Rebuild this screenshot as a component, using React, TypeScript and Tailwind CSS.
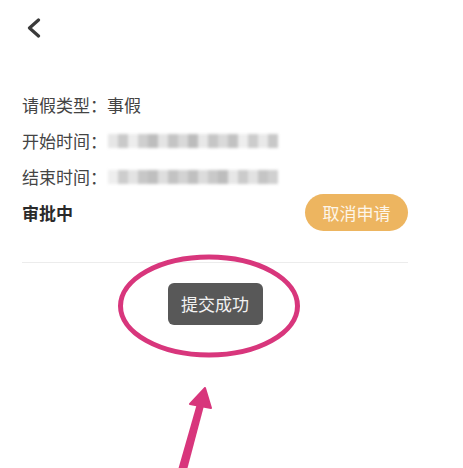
import React from 'react';

const rows = [
  { label: '请假类型：', value: '事假' },
  { label: '开始时间：', value: null },
  { label: '结束时间：', value: null },
];

// mosaic blocks standing in for the masked date values
const mosaic = [
  ['#e6e6e6', '#c9c9c9', '#ededed', '#cfcfcf', '#bdbdbd', '#e4e4e4', '#c4c4c4', '#d9d9d9', '#bcbcbc', '#e8e8e8', '#c6c6c6', '#dadada', '#c2c2c2', '#eeeeee', '#cccccc', '#e9e9e9', '#c8c8c8'],
  ['#eeeeee', '#cdcdcd', '#e3e3e3', '#c7c7c7', '#bfbfbf', '#dedede', '#c3c3c3', '#d3d3d3', '#c0c0c0', '#dcdcdc', '#c9c9c9', '#bdbdbd', '#e7e7e7', '#cbcbcb', '#e2e2e2', '#c5c5c5', '#d0d0d0'],
];

function Masked({ pattern }: { pattern: string[] }) {
  return (
    <div className="ml-[1px] flex h-[14px] blur-[1.5px]">
      {pattern.map((c, i) => (
        <div key={i} className="h-full w-[10px]" style={{ backgroundColor: c }} />
      ))}
    </div>
  );
}

export default function App() {
  return (
    <div
      className="relative h-[468px] w-[463px] overflow-hidden bg-white text-[#444]"
      style={{ fontFamily: '"Noto Sans CJK SC", "Noto Sans", sans-serif' }}
    >
      {/* Header */}
      <div className="flex h-[56px] items-center pl-[27px]">
        <svg width="14" height="20" viewBox="0 0 14 20" fill="none">
          <polyline points="11.5,2 2.5,10 11.5,18" stroke="#3a3a3a" strokeWidth="3.2" strokeLinecap="round" strokeLinejoin="round" />
        </svg>
      </div>

      <div className="pl-[22px] pr-[55px] pt-[31px]">
        {rows.map((row, i) => (
          <div key={row.label} className={`flex items-center text-[17px] ${i === 2 ? 'h-[35px]' : 'h-[36px]'}`}>
            <span>{row.label}</span>
            {row.value ? <span>{row.value}</span> : <Masked pattern={mosaic[i - 1]} />}
          </div>
        ))}

        {/* Status + cancel */}
        <div className="flex h-[37px] items-center justify-between">
          <span className="text-[17px] font-bold text-[#2a2a2a]">审批中</span>
          <button className="flex h-[37px] w-[103px] items-center justify-center rounded-full bg-[#edb560] text-[17px] text-[#fdf6ea]">
            取消申请
          </button>
        </div>

        <div className="mt-[31px] h-px bg-[#ececec]" />

        {/* Toast */}
        <div className="mt-[20px] flex justify-center">
          <div className="flex h-[42px] w-[95px] items-center justify-center rounded-[6px] bg-[#585858] text-[17px] text-[#f2f2f2]">
            提交成功
          </div>
        </div>
      </div>

      {/* Annotation: circle + arrow */}
      <svg className="pointer-events-none absolute left-0 top-0" width="463" height="468" viewBox="0 0 463 468">
        <ellipse cx="209" cy="306" rx="88.5" ry="49" fill="none" stroke="#d8367c" strokeWidth="5" />
        <polygon points="178,470 187,470 205,402 198,400" fill="#d8367c" />
        <polygon points="205,388 190,404 211,408" fill="#d8367c" stroke="#d8367c" strokeWidth="2" strokeLinejoin="round" />
      </svg>
    </div>
  );
}
